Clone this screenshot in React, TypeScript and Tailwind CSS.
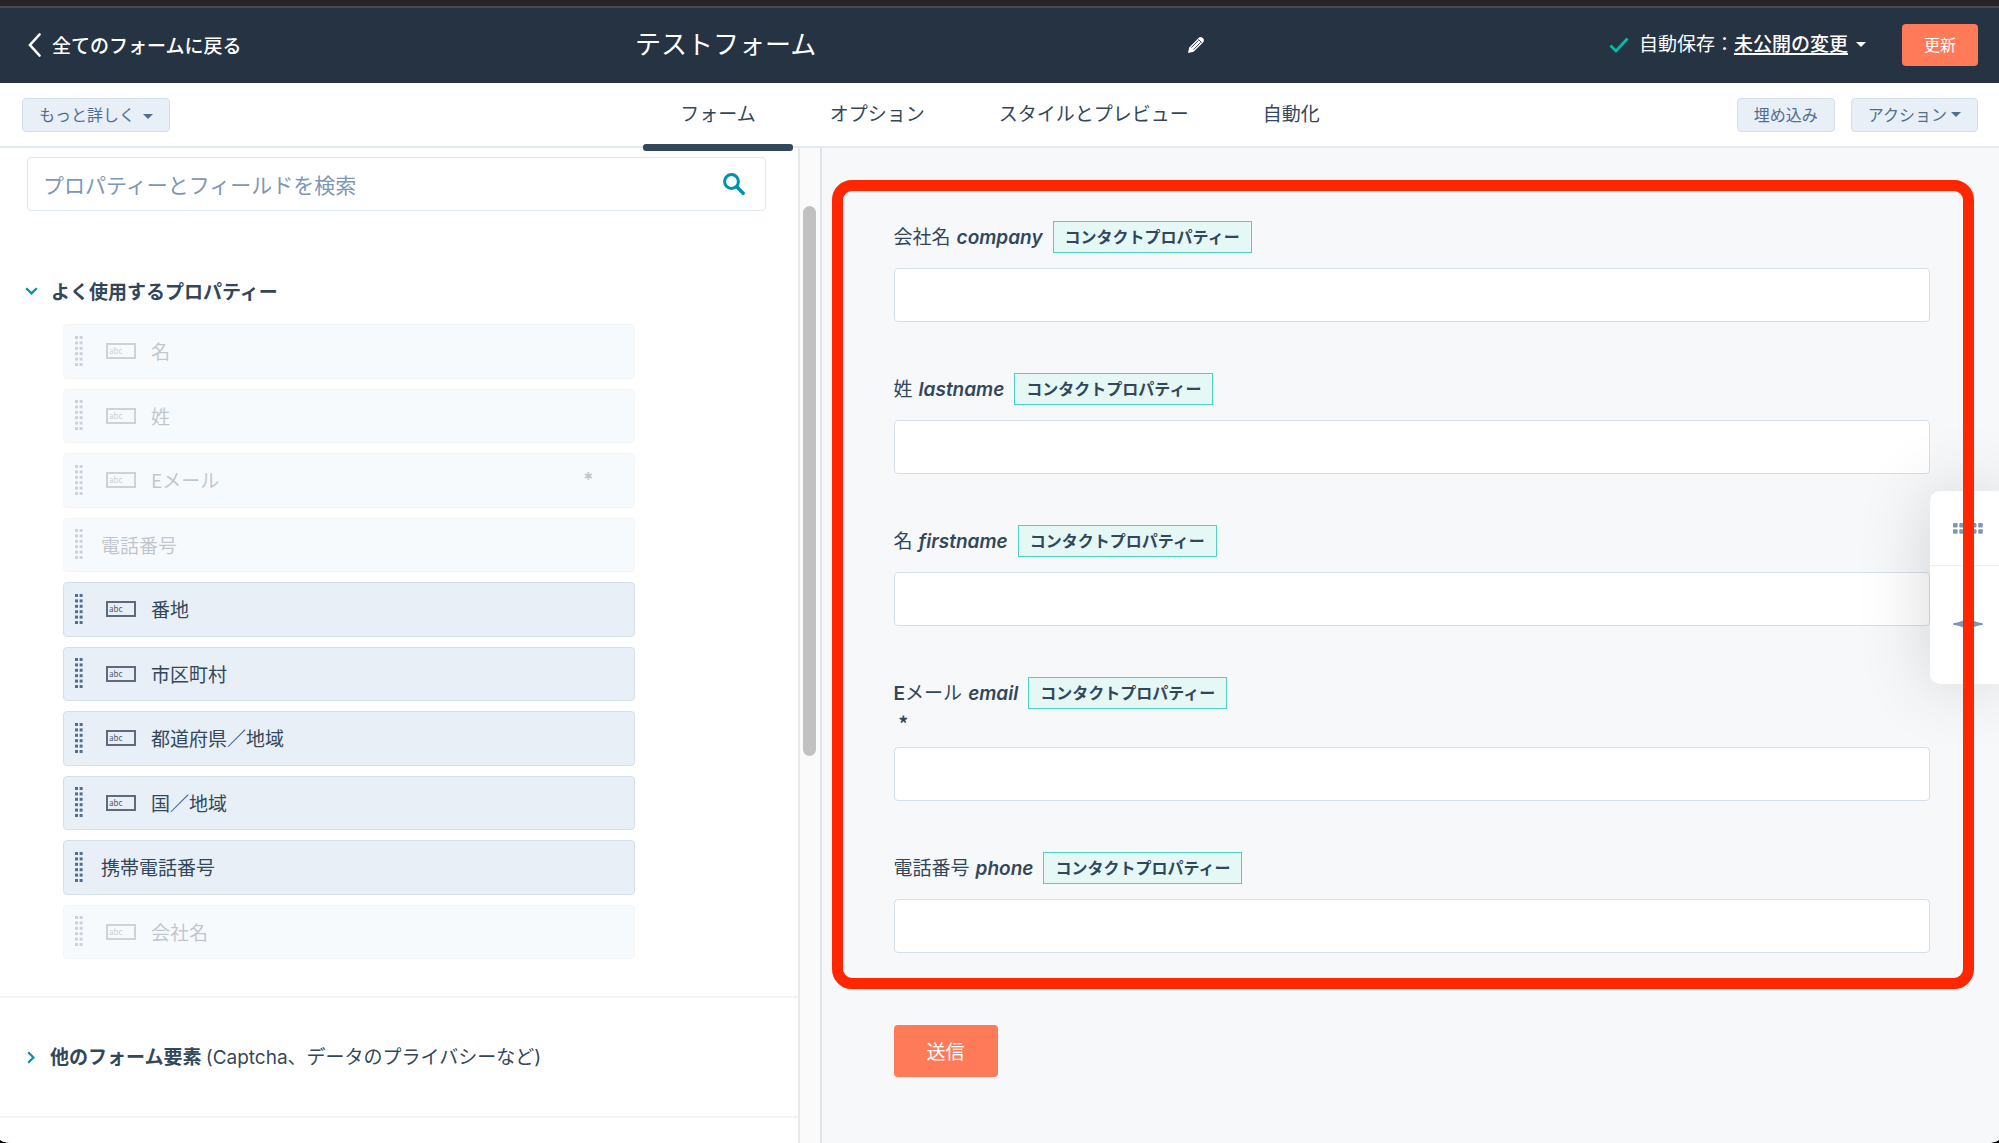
import clsx from "clsx";

interface Property {
  label: string;
  icon?: boolean;
  used?: boolean;
  required?: boolean;
}

interface FormField {
  /** Latin prefix of the label, drawn heavier than the Japanese part. */
  prefix?: string;
  label: string;
  name: string;
  required?: boolean;
}

const PROPERTIES: Property[] = [
  { label: "名", icon: true, used: true },
  { label: "姓", icon: true, used: true },
  { label: "Eメール", icon: true, used: true, required: true },
  { label: "電話番号", used: true },
  { label: "番地", icon: true },
  { label: "市区町村", icon: true },
  { label: "都道府県／地域", icon: true },
  { label: "国／地域", icon: true },
  { label: "携帯電話番号" },
  { label: "会社名", icon: true, used: true },
];

const FIELDS: FormField[] = [
  { label: "会社名", name: "company" },
  { label: "姓", name: "lastname" },
  { label: "名", name: "firstname" },
  { prefix: "E", label: "メール", name: "email", required: true },
  { label: "電話番号", name: "phone" },
];

const TABS = ["フォーム", "オプション", "スタイルとプレビュー", "自動化"];

const LATIN = "font-['Inter','Noto_Sans_CJK_JP',sans-serif]";

function Caret({ className }: { className?: string }) {
  return (
    <svg aria-hidden="true" viewBox="0 0 10 5" className={clsx("h-[5px] w-[10px]", className)}>
      <path d="M0 0h10L5 5z" fill="currentColor" />
    </svg>
  );
}

function DragHandle() {
  return (
    <svg aria-hidden="true" viewBox="0 0 8 31" className="h-[31px] w-2 shrink-0 text-[#506e91]">
      {[0, 1, 2, 3, 4, 5].map((row) => (
        <g key={row} fill="currentColor">
          <rect x="0" y={row * 5.4} width="3" height="3" />
          <rect x="4.6" y={row * 5.4} width="3" height="3" />
        </g>
      ))}
    </svg>
  );
}

function TextFieldIcon() {
  return (
    <span
      aria-hidden="true"
      className="flex h-4 w-[30px] shrink-0 items-center border-2 border-[#5c6c7c] pl-px text-[8px] leading-none text-[#4a5b6c]"
    >
      abc
    </span>
  );
}

/* Row in the property list. Properties already on the form are dimmed. */
function PropertyRow({ property }: { property: Property }) {
  return (
    <li
      className={clsx(
        "flex items-center rounded-[4px] border border-[#d5dfe9] bg-[#e8eff7] pl-[11px]",
        property.used && "opacity-30",
      )}
    >
      <DragHandle />
      {property.icon ? (
        <span className="ml-[23px] flex items-center gap-[15px]">
          <TextFieldIcon />
          <span>{property.label}</span>
        </span>
      ) : (
        <span className="ml-[18px]">{property.label}</span>
      )}
      {property.required && <span className={clsx(LATIN, "mr-10 ml-auto font-bold")}>*</span>}
    </li>
  );
}

function FieldPreview({ field }: { field: FormField }) {
  return (
    <div>
      <label htmlFor={field.name} className="block">
        <span className="flex h-8 items-center gap-[10px]">
          <span>
            {field.prefix && <span className={clsx(LATIN, "font-semibold")}>{field.prefix}</span>}
            {field.label}
            <em className={clsx(LATIN, "ml-[6px] font-semibold")}>{field.name}</em>
          </span>
          <span
            className={clsx(
              LATIN,
              "flex h-8 items-center border border-[#4fd0c2] bg-[#e5f8f6] px-[11px] pb-px text-base font-semibold",
            )}
          >
            コンタクトプロパティー
          </span>
        </span>
        {field.required && <span className="block h-[23px] pl-[5px] leading-7 font-bold">*</span>}
      </label>
      <input
        id={field.name}
        type="text"
        className="mt-[15px] block h-[54px] w-full rounded-[4px] border border-[#d5dfe9] bg-white px-4 outline-none"
      />
    </div>
  );
}

function TopBar() {
  return (
    <header className="flex h-[75px] items-center bg-[#253342] pr-[21px] pb-[2px] text-white">
      <div className="w-[635px] shrink-0 pl-7">
        <a href="#" className="flex w-fit items-center gap-[11px] font-medium">
          <svg aria-hidden="true" viewBox="0 0 13 24" className="h-6 w-[13px]" fill="none">
            <path d="M11.5 1.5 2 12l9.500 10.500" stroke="currentColor" strokeWidth="2.600" strokeLinecap="round" />
          </svg>
          全てのフォームに戻る
        </a>
      </div>
      <div className="flex w-[570px] items-center justify-between">
        <h1 className={clsx(LATIN, "text-[26px] leading-8")}>テストフォーム</h1>
        <button type="button" aria-label="フォーム名を編集">
          <svg aria-hidden="true" viewBox="0 0 18 18" className="h-[18px] w-[18px]">
            <path
              d="M1 17l1.200-5.600L11.800 1.800c1-1 2.600-1 3.600 0l.8.8c1 1 1 2.600 0 3.600L6.600 15.800z"
              fill="currentColor"
            />
            <path d="M4.300 11.600l7.200-7.200M6.400 13.700l7.200-7.200M11.300 3.300l3.400 3.400" stroke="#253342" strokeWidth=".9" fill="none" />
          </svg>
        </button>
      </div>
      <div className={clsx(LATIN, "ml-auto flex items-center")}>
        <svg aria-hidden="true" viewBox="0 0 20 16" className="h-4 w-5" fill="none">
          <path d="M1.500 8.500 7 14 18.500 1.500" stroke="#00bda5" strokeWidth="2.800" />
        </svg>
        <span className="ml-[10px]">自動保存：</span>
        <button type="button" className="flex items-center gap-2 font-medium">
          <span className="underline decoration-2 underline-offset-2">未公開の変更</span>
          <Caret />
        </button>
        <button type="button" className="ml-9 h-[42px] rounded-[4px] bg-[#ff7a59] px-[22px] text-base">
          更新
        </button>
      </div>
    </header>
  );
}

function SubNav() {
  const button = clsx(
    LATIN,
    "flex h-[34px] items-center rounded-[4px] border border-[#d5dfe9] bg-[#e8eff7] px-4 text-base text-[#506e91]",
  );
  return (
    <div className="grid h-[65px] grid-cols-[1fr_auto_1fr] items-center border-b-2 border-[#e3eaf0] bg-white pr-[21px] pl-[22px]">
      <div>
        <button type="button" className={clsx(button, "gap-2")}>
          もっと詳しく
          <Caret className="mt-1" />
        </button>
      </div>
      <nav className={clsx(LATIN, "flex h-[63px]")}>
        {TABS.map((tab, i) => (
          <a
            key={tab}
            href="#"
            aria-current={i === 0 ? "page" : undefined}
            className="relative flex items-center px-[37px]"
          >
            {tab}
            {i === 0 && <span className="absolute inset-x-0 -bottom-[5px] z-10 h-[7px] rounded-[3px] bg-[#33475b]" />}
          </a>
        ))}
      </nav>
      <div className="flex justify-end gap-4">
        <button type="button" className={button}>
          埋め込み
        </button>
        <button type="button" className={clsx(button, "gap-1")}>
          アクション
          <Caret />
        </button>
      </div>
    </div>
  );
}

function PropertyPanel() {
  return (
    <aside className="w-[calc(40%-2px)] bg-white pt-[9px]">
      <div className="mr-8 ml-[27px] flex h-[54px] items-center rounded-[4px] border border-[#dfe7ee] pr-5 pl-[15px]">
        <input
          type="search"
          aria-label="プロパティーとフィールドを検索"
          placeholder="プロパティーとフィールドを検索"
          className="min-w-0 flex-1 text-[21px] outline-none placeholder:text-[#7c98b6]"
        />
        <svg aria-hidden="true" viewBox="0 0 22 22" className="h-[22px] w-[22px]" fill="none" stroke="#0091ae">
          <circle cx="8.500" cy="8.500" r="6.900" strokeWidth="3" />
          <path d="M13.700 13.700l6.500 6.500" strokeWidth="3.400" strokeLinecap="round" />
        </svg>
      </div>

      <button type="button" className="mt-[66px] ml-[25px] flex items-center gap-[13px] font-semibold">
        <svg aria-hidden="true" viewBox="0 0 13 8" className="h-2 w-[13px]" fill="none">
          <path d="M1.200 1.200 6.500 6.400l5.300-5.200" stroke="#0091ae" strokeWidth="2.200" />
        </svg>
        よく使用するプロパティー
      </button>
      <ul className="mt-[19px] mr-[163px] ml-[63px] grid h-[635px] auto-rows-fr gap-[10px]">
        {PROPERTIES.map((property) => (
          <PropertyRow key={property.label} property={property} />
        ))}
      </ul>

      <div className="mt-[37px] border-y-2 border-[#f0f3f7] py-11 pl-[27px]">
        <button type="button" className="flex items-center gap-[15px]">
          <svg aria-hidden="true" viewBox="0 0 8 13" className="h-[13px] w-2" fill="none">
            <path d="M1.200 1.200 6.400 6.500l-5.200 5.300" stroke="#0091ae" strokeWidth="2.200" />
          </svg>
          <span>
            <strong>他のフォーム要素</strong> <span className={LATIN}>(Captcha、データのプライバシーなど)</span>
          </span>
        </button>
      </div>
    </aside>
  );
}

function FloatingTools() {
  return (
    <div className="absolute top-[343px] right-0 z-10 h-[193px] w-[69px] rounded-l-[10px] bg-white text-[#7c98b6] shadow-[0_0_72px_rgba(0,0,0,0.16)]">
      <button type="button" aria-label="ツール" className="flex h-[75px] w-full items-center border-b border-[#eaf0f6] pl-[23px]">
        <svg aria-hidden="true" viewBox="0 0 30 11" className="h-[11px] w-[30px]">
          {[0, 1, 2, 3, 4].map((col) => (
            <g key={col} fill="currentColor">
              <rect x={col * 6.3} y="0" width="4.600" height="4.600" rx="1" />
              <rect x={col * 6.3} y="6.200" width="4.600" height="4.600" rx="1" />
            </g>
          ))}
        </svg>
      </button>
      <button type="button" aria-label="アシスタント" className="flex h-[115px] w-full items-center pl-[23px]">
        <svg aria-hidden="true" viewBox="0 0 30 30" className="h-[30px] w-[30px]">
          <path
            d="M15 0c.8 0 1.200.6 1.400 1.600l1.400 7.200c.3 1.400.9 2 2.300 2.600l3.600 1.600 5 .9c.9.2 1.300.6 1.300 1.100s-.4.900-1.300 1.100l-5 .9-3.600 1.600c-1.400.6-2 1.200-2.300 2.600l-1.400 7.200C16.200 29.400 15.800 30 15 30s-1.200-.6-1.400-1.600l-1.400-7.200c-.3-1.400-.9-2-2.300-2.600L6.300 17l-5-.9C.4 15.900 0 15.500 0 15s.4-.9 1.300-1.100l5-.9 3.600-1.600c1.400-.6 2-1.200 2.300-2.600l1.400-7.200C13.800.6 14.200 0 15 0z"
            fill="currentColor"
          />
        </svg>
      </button>
    </div>
  );
}

function FormPreview() {
  return (
    <main className="relative flex-1 overflow-hidden border-l-2 border-[#dbe4ec] bg-[#f6f8fa] pt-8 pr-[25px] pl-[10px]">
      <form onSubmit={(e) => e.preventDefault()}>
        <div className="relative flex flex-col gap-[51px] pt-[41px] pr-11 pb-9 pl-[62px]">
          {FIELDS.map((field) => (
            <FieldPreview key={field.name} field={field} />
          ))}
          <div className="pointer-events-none absolute inset-0 z-20 rounded-[20px] border-[11px] border-[#ff2600]" />
        </div>
        <button type="submit" className="mt-9 ml-[62px] h-[52px] rounded-[4px] bg-[#ff7a59] px-[33px] text-white">
          送信
        </button>
      </form>
      <FloatingTools />
    </main>
  );
}

export default function App() {
  return (
    <div className="bg-black font-['Noto_Sans_CJK_JP',sans-serif] text-[19px] leading-7 text-[#33475b]">
      <div className="flex min-h-screen flex-col overflow-hidden rounded-br-[13px_4px] rounded-bl-[13px_4px] bg-white">
        <div className="h-2 border-b-2 border-[#4a494f] bg-[#252429]" />
        <TopBar />
        <SubNav />
        <div className="flex flex-1">
          <PropertyPanel />
          <div className="w-[22px] border-l-2 border-[#e8e8e8] bg-[#fafafa] pt-[58px] pl-[3px]">
            <div className="h-[550px] w-[13px] rounded-full bg-[#c1c1c1]" />
          </div>
          <FormPreview />
        </div>
      </div>
    </div>
  );
}
